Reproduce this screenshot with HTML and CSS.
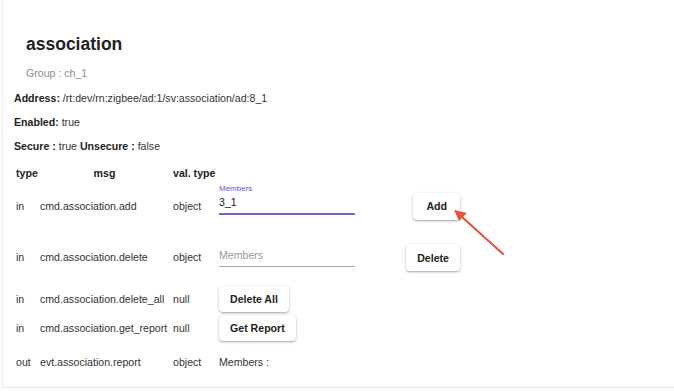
FILE: index.html
```html
<!DOCTYPE html>
<html lang="en">
<head>
    <meta charset="UTF-8">
    <meta name="viewport" content="width=device-width, initial-scale=1.0">
    <title>association</title>
    <link rel="stylesheet" href="styles.css">
</head>
<body>

    <div class="card">
        <h1 class="title">association</h1>
        <div class="subtitle">Group : ch_1</div>

        <p class="info"><b>Address:</b> /rt:dev/rn:zigbee/ad:1/sv:association/ad:8_1</p>
        <p class="info"><b>Enabled:</b> true</p>
        <p class="info"><b>Secure :</b> true <b>Unsecure :</b> false</p>

        <table class="interfaces">
            <colgroup>
                <col class="col-type">
                <col class="col-msg">
                <col class="col-val">
                <col class="col-action">
            </colgroup>
            <thead>
                <tr>
                    <th>type</th>
                    <th>msg</th>
                    <th>val. type</th>
                    <th></th>
                </tr>
            </thead>
            <tbody>
                <tr class="row-first">
                    <td>in</td>
                    <td>cmd.association.add</td>
                    <td>object</td>
                    <td>
                        <div class="action">
                            <div class="field focused">
                                <label class="field-label">Members</label>
                                <input class="field-input" type="text" value="3_1">
                            </div>
                            <button class="btn btn-add">Add</button>
                        </div>
                    </td>
                </tr>
                <tr class="row-second">
                    <td>in</td>
                    <td>cmd.association.delete</td>
                    <td>object</td>
                    <td>
                        <div class="action">
                            <div class="field">
                                <input class="field-input" type="text" placeholder="Members">
                            </div>
                            <button class="btn btn-delete">Delete</button>
                        </div>
                    </td>
                </tr>
                <tr class="row-btn">
                    <td>in</td>
                    <td>cmd.association.delete_all</td>
                    <td>null</td>
                    <td><button class="btn">Delete All</button></td>
                </tr>
                <tr class="row-btn row-btn-2">
                    <td>in</td>
                    <td>cmd.association.get_report</td>
                    <td>null</td>
                    <td><button class="btn">Get Report</button></td>
                </tr>
                <tr class="row-last">
                    <td>out</td>
                    <td>evt.association.report</td>
                    <td>object</td>
                    <td>Members :</td>
                </tr>
            </tbody>
        </table>
    </div>

    <!-- annotation arrow pointing at the Add button -->
    <svg class="arrow" width="674" height="392" viewBox="0 0 674 392">
        <line x1="503" y1="254" x2="462" y2="217" stroke="#e2563a" stroke-width="2.2" stroke-linecap="round"/>
        <polygon points="454,210 467,213 459,221" fill="#e2563a"/>
    </svg>

</body>
</html>
```

FILE: styles.css
```css
body {
    font-family: "Liberation Sans", Arial, sans-serif;
    font-size: 10.6px;
    color: #333;
    background-color: #fff;
    margin: 0;
    padding: 0;
    overflow: hidden;
}

.card {
    margin-left: 2px;
    height: 388px;
    box-sizing: border-box;
    border-left: 1px solid #ececec;
    border-bottom: 1px solid #ececec;
    padding: 33px 0 0 11px;
}

.title {
    margin: 0 0 0 12px;
    font-size: 17.5px;
    line-height: 22px;
    font-weight: bold;
    color: #222;
}

.subtitle {
    margin: 11px 0 0 12px;
    line-height: 14px;
    color: #8a8a8a;
}

.info {
    margin: 11px 0 0 0;
    line-height: 14px;
}

.info + .info {
    margin-top: 10px;
}

.info b {
    color: #222;
}

.interfaces {
    border-collapse: collapse;
    table-layout: fixed;
    width: 448px;
    margin-top: 10px;
}

.col-type { width: 24px; }
.col-msg { width: 133px; }
.col-val { width: 46px; }
.col-action { width: 245px; }

.interfaces th,
.interfaces td {
    padding: 0 2px;
    vertical-align: middle;
    text-align: left;
    white-space: nowrap;
}

.interfaces th {
    text-align: center;
    color: #222;
    height: 20px;
}

.row-first td {
    height: 46px;
}

.row-second td {
    height: 56px;
}

.row-btn td {
    height: 28px;
}

.row-btn-2 td {
    height: 30px;
}

.row-last td {
    height: 38px;
}

.action {
    display: flex;
    align-items: center;
    justify-content: space-between;
}

.field {
    width: 136px;
    padding-top: 12px;
    margin-bottom: 11px;
    position: relative;
    border-bottom: 1px solid #a8a8a8;
}

.field.focused {
    border-bottom: 2px solid #7b62d6;
    margin-bottom: 14px;
}

.field-label {
    position: absolute;
    top: 0;
    left: 0;
    font-size: 8px;
    line-height: 10px;
    color: #6f55d0;
}

.field-input {
    display: block;
    border: none;
    outline: none;
    padding: 0 0 4px 0;
    height: 17px;
    box-sizing: border-box;
    width: 100%;
    font-family: inherit;
    font-size: 10.6px;
    line-height: 13px;
    color: #222;
    background: transparent;
}

.field-input::placeholder {
    color: #999;
}

.btn {
    height: 26px;
    padding: 0 11px;
    background-color: #fff;
    color: #222;
    border: none;
    border-radius: 4px;
    box-shadow: 0 1px 3px rgba(0, 0, 0, 0.28), 0 1px 1px rgba(0, 0, 0, 0.1);
    font-family: inherit;
    font-size: 10.6px;
    font-weight: bold;
    cursor: pointer;
}

.btn-add {
    height: 27px;
    padding: 0 13px;
}

.btn-delete {
    height: 27px;
    margin-top: 1px;
}

.arrow {
    position: absolute;
    top: 0;
    left: 0;
    pointer-events: none;
}
```
